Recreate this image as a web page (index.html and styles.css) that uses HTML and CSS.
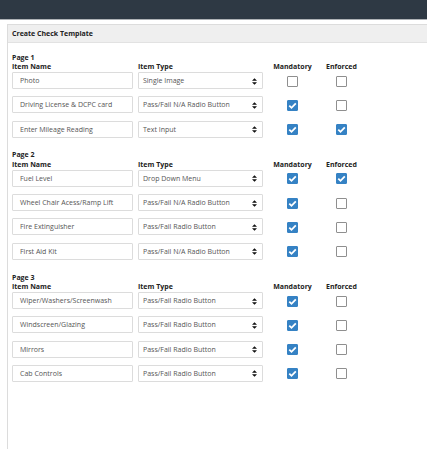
FILE: index.html
```html
<!DOCTYPE html>
<html>
<head>
<meta charset="utf-8">
<link rel="stylesheet" href="styles.css">
</head>
<body>
<div class="topbar"></div>
<div class="main">
  <div class="panel">
    <div class="panel-head">Create Check Template</div>
    <div class="panel-body">
      <section class="page">
        <div class="page-label">Page 1</div>
        <div class="grid head">
          <div>Item Name</div><div>Item Type</div><div class="c">Mandatory</div><div class="c">Enforced</div>
        </div>
        <div class="rows">
          <div class="grid row">
            <div class="inp">Photo</div>
            <div class="sel">Single Image<svg class="arr" viewBox="0 0 6 8"><path d="M3 0L6 3H0Z M3 8L6 5H0Z"/></svg></div>
            <div class="c"><span class="cb"></span></div>
            <div class="c"><span class="cb"></span></div>
          </div>
          <div class="grid row">
            <div class="inp">Driving License &amp; DCPC card</div>
            <div class="sel">Pass/Fail N/A Radio Button<svg class="arr" viewBox="0 0 6 8"><path d="M3 0L6 3H0Z M3 8L6 5H0Z"/></svg></div>
            <div class="c"><span class="cb on"><svg viewBox="0 0 11 11"><path d="M2.3 5.6L4.5 7.8L8.8 3.3"/></svg></span></div>
            <div class="c"><span class="cb"></span></div>
          </div>
          <div class="grid row">
            <div class="inp">Enter Mileage Reading</div>
            <div class="sel">Text Input<svg class="arr" viewBox="0 0 6 8"><path d="M3 0L6 3H0Z M3 8L6 5H0Z"/></svg></div>
            <div class="c"><span class="cb on"><svg viewBox="0 0 11 11"><path d="M2.3 5.6L4.5 7.8L8.8 3.3"/></svg></span></div>
            <div class="c"><span class="cb on"><svg viewBox="0 0 11 11"><path d="M2.3 5.6L4.5 7.8L8.8 3.3"/></svg></span></div>
          </div>
        </div>
      </section>

      <section class="page">
        <div class="page-label">Page 2</div>
        <div class="grid head">
          <div>Item Name</div><div>Item Type</div><div class="c">Mandatory</div><div class="c">Enforced</div>
        </div>
        <div class="rows">
          <div class="grid row">
            <div class="inp">Fuel Level</div>
            <div class="sel">Drop Down Menu<svg class="arr" viewBox="0 0 6 8"><path d="M3 0L6 3H0Z M3 8L6 5H0Z"/></svg></div>
            <div class="c"><span class="cb on"><svg viewBox="0 0 11 11"><path d="M2.3 5.6L4.5 7.8L8.8 3.3"/></svg></span></div>
            <div class="c"><span class="cb on"><svg viewBox="0 0 11 11"><path d="M2.3 5.6L4.5 7.8L8.8 3.3"/></svg></span></div>
          </div>
          <div class="grid row">
            <div class="inp">Wheel Chair Acess/Ramp Lift</div>
            <div class="sel">Pass/Fail N/A Radio Button<svg class="arr" viewBox="0 0 6 8"><path d="M3 0L6 3H0Z M3 8L6 5H0Z"/></svg></div>
            <div class="c"><span class="cb on"><svg viewBox="0 0 11 11"><path d="M2.3 5.6L4.5 7.8L8.8 3.3"/></svg></span></div>
            <div class="c"><span class="cb"></span></div>
          </div>
          <div class="grid row">
            <div class="inp">Fire Extinguisher</div>
            <div class="sel">Pass/Fail Radio Button<svg class="arr" viewBox="0 0 6 8"><path d="M3 0L6 3H0Z M3 8L6 5H0Z"/></svg></div>
            <div class="c"><span class="cb on"><svg viewBox="0 0 11 11"><path d="M2.3 5.6L4.5 7.8L8.8 3.3"/></svg></span></div>
            <div class="c"><span class="cb"></span></div>
          </div>
          <div class="grid row">
            <div class="inp">First Aid Kit</div>
            <div class="sel">Pass/Fail N/A Radio Button<svg class="arr" viewBox="0 0 6 8"><path d="M3 0L6 3H0Z M3 8L6 5H0Z"/></svg></div>
            <div class="c"><span class="cb on"><svg viewBox="0 0 11 11"><path d="M2.3 5.6L4.5 7.8L8.8 3.3"/></svg></span></div>
            <div class="c"><span class="cb"></span></div>
          </div>
        </div>
      </section>

      <section class="page">
        <div class="page-label">Page 3</div>
        <div class="grid head">
          <div>Item Name</div><div>Item Type</div><div class="c">Mandatory</div><div class="c">Enforced</div>
        </div>
        <div class="rows">
          <div class="grid row">
            <div class="inp">Wiper/Washers/Screenwash</div>
            <div class="sel">Pass/Fail Radio Button<svg class="arr" viewBox="0 0 6 8"><path d="M3 0L6 3H0Z M3 8L6 5H0Z"/></svg></div>
            <div class="c"><span class="cb on"><svg viewBox="0 0 11 11"><path d="M2.3 5.6L4.5 7.8L8.8 3.3"/></svg></span></div>
            <div class="c"><span class="cb"></span></div>
          </div>
          <div class="grid row">
            <div class="inp">Windscreen/Glazing</div>
            <div class="sel">Pass/Fail Radio Button<svg class="arr" viewBox="0 0 6 8"><path d="M3 0L6 3H0Z M3 8L6 5H0Z"/></svg></div>
            <div class="c"><span class="cb on"><svg viewBox="0 0 11 11"><path d="M2.3 5.6L4.5 7.8L8.8 3.3"/></svg></span></div>
            <div class="c"><span class="cb"></span></div>
          </div>
          <div class="grid row">
            <div class="inp">Mirrors</div>
            <div class="sel">Pass/Fail Radio Button<svg class="arr" viewBox="0 0 6 8"><path d="M3 0L6 3H0Z M3 8L6 5H0Z"/></svg></div>
            <div class="c"><span class="cb on"><svg viewBox="0 0 11 11"><path d="M2.3 5.6L4.5 7.8L8.8 3.3"/></svg></span></div>
            <div class="c"><span class="cb"></span></div>
          </div>
          <div class="grid row">
            <div class="inp">Cab Controls</div>
            <div class="sel">Pass/Fail Radio Button<svg class="arr" viewBox="0 0 6 8"><path d="M3 0L6 3H0Z M3 8L6 5H0Z"/></svg></div>
            <div class="c"><span class="cb on"><svg viewBox="0 0 11 11"><path d="M2.3 5.6L4.5 7.8L8.8 3.3"/></svg></span></div>
            <div class="c"><span class="cb"></span></div>
          </div>
        </div>
      </section>
    </div>
  </div>
</div>
</body>
</html>
```

FILE: styles.css
```css
html, body {
  margin: 0;
  padding: 0;
  background: #fff;
  height: 100%;
  overflow: hidden;
}
body {
  font-family: "Open Sans", "Liberation Sans", sans-serif;
  font-size: 7px;
  color: #222;
}
.topbar {
  height: 19px;
  background: #2e3944;
  border-bottom: 1px solid #aeb2b6;
}
.main {
  padding: 4px 0 0 7px;
  height: 430px;
  box-sizing: border-box;
}
.panel {
  border: 1px solid #dcdcdc;
  border-right: none;
  border-bottom: none;
  height: 100%;
  box-sizing: border-box;
}
.panel-head {
  height: 17px;
  line-height: 17px;
  background: #efefef;
  border-bottom: 1px solid #e2e2e2;
  padding-left: 4px;
  font-weight: 700;
  color: #222;
}
.panel-body {
  padding: 9.5px 0 0 4px;
}
.page + .page {
  margin-top: 12.8px;
}
.page-label {
  font-weight: 700;
  line-height: 9.5px;
  height: 9.5px;
}
.grid {
  display: grid;
  grid-template-columns: 126px 130px 49px 49px;
}
.head {
  font-weight: 700;
  line-height: 10px;
  height: 10px;
}
.c {
  text-align: center;
}
.rows {
  display: flex;
  flex-direction: column;
  gap: 7.3px;
}
.row {
  height: 17px;
  align-items: center;
}
.inp, .sel {
  height: 17px;
  box-sizing: border-box;
  border: 1px solid #dcdcdc;
  border-radius: 1px;
  line-height: 15px;
  color: #555;
  white-space: nowrap;
  overflow: hidden;
}
.inp {
  width: 121px;
  padding-left: 7px;
}
.sel {
  width: 125px;
  padding-left: 4px;
  position: relative;
}
.arr {
  position: absolute;
  right: 5px;
  top: 4.5px;
  width: 5px;
  height: 7px;
  fill: #111;
}
.row .c {
  height: 11px;
  padding-top: 1px;
}
.cb {
  display: inline-block;
  width: 11px;
  height: 11px;
  box-sizing: border-box;
  border: 1px solid #8f8f8f;
  border-radius: 1px;
  background: #fff;
  vertical-align: top;
}
.cb.on {
  background: #3582c4;
  border-color: #3582c4;
}
.cb svg {
  display: block;
  width: 11px;
  height: 11px;
  margin: -1px;
  fill: none;
  stroke: #fff;
  stroke-width: 1.8;
}
```
